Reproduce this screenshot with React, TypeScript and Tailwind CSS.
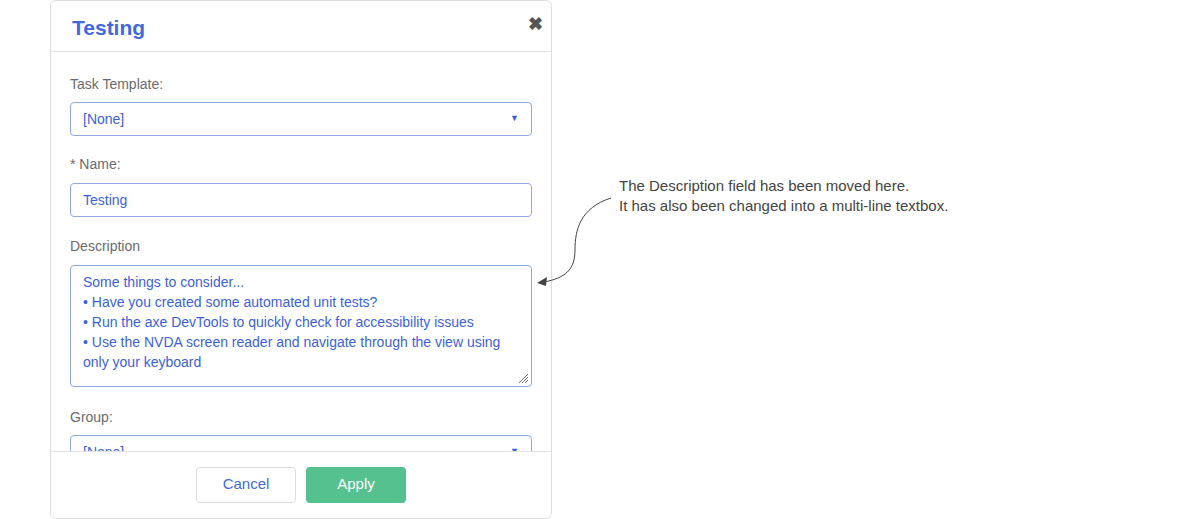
export default function App() {
  const label = "text-[14px] leading-[20px] text-[#6b6b6b]";
  const box = "border border-[#8fa8e8] rounded-[4px] px-[12px] text-[14px] text-[#3c5fe0]";
  return (
    <div className="relative w-[1200px] h-[519px] bg-white" style={{ fontFamily: '"Liberation Sans", Arial, sans-serif' }}>
      <div className="absolute left-[50px] top-0 w-[502px] h-[519px] border border-[#dedede] rounded-[6px] flex flex-col overflow-hidden">
        <div className="h-[51px] shrink-0 border-b border-[#e2e2e2] flex items-center justify-between pl-[21px] pr-[8px] pt-[4px]">
          <span className="text-[21px] font-bold text-[#4169e1]">Testing</span>
          <span className="text-[18px] font-bold text-[#555] -mt-[8px]">✖</span>
        </div>
        <div className="flex-1 overflow-hidden px-[19px] pt-[22px]">
          <div className={label}>Task Template:</div>
          <div className={`${box} mt-[8px] h-[34px] flex items-center justify-between`}>
            <span>[None]</span><span className="text-[9px] text-[#3c5fe0]">▼</span>
          </div>
          <div className={`${label} mt-[18px]`}>* Name:</div>
          <div className={`${box} mt-[9px] h-[34px] flex items-center`}>Testing</div>
          <div className={`${label} mt-[19px]`}>Description</div>
          <div className={`${box} relative mt-[9px] h-[122px] pt-[6px] leading-[20px]`}>
            <div>Some things to consider...</div>
            <div>• Have you created some automated unit tests?</div>
            <div>• Run the axe DevTools to quickly check for accessibility issues</div>
            <div>• Use the NVDA screen reader and navigate through the view using only your keyboard</div>
            <svg className="absolute right-[2px] bottom-[2px]" width="12" height="12" viewBox="0 0 12 12">
              <path d="M11 2L2 11M11 5L5 11M11 8L8 11" stroke="#777" strokeWidth="1" />
            </svg>
          </div>
          <div className={`${label} mt-[20px]`}>Group:</div>
          <div className={`${box} mt-[8px] h-[34px] flex items-center justify-between`}>
            <span>[None]</span><span className="text-[9px]">▼</span>
          </div>
        </div>
        <div className="h-[67px] shrink-0 border-t border-[#e2e2e2] flex items-center justify-center gap-[10px] pb-[1px]">
          <button className="w-[100px] h-[36px] border border-[#dcdcdc] rounded-[4px] text-[15px] text-[#4169e1] bg-white">Cancel</button>
          <button className="w-[100px] h-[36px] rounded-[4px] text-[15px] text-white bg-[#55c18e]">Apply</button>
        </div>
      </div>
      <div className="absolute left-[619px] top-[176px] text-[15px] leading-[20px] text-[#444]">
        <div>The Description field has been moved here.</div>
        <div>It has also been changed into a multi-line textbox.</div>
      </div>
      <svg className="absolute left-[530px] top-[190px]" width="90" height="100" viewBox="0 0 90 100">
        <path d="M81 8 C 50 18, 45 40, 45 60 C 45 80, 35 88, 14 92" fill="none" stroke="#444" strokeWidth="1" />
        <path d="M7 93 L17 87 L16 96 Z" fill="#444" />
      </svg>
    </div>
  );
}
